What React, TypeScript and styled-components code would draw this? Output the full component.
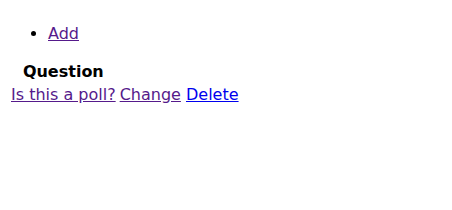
import styled, { createGlobalStyle } from "styled-components";

/**
 * Styled
 */
const GlobalStyle = createGlobalStyle`
  body {
    margin: 8px;
    font-family: "DejaVu Sans", sans-serif;
    font-size: 16px;
    background: #ffffff;
    color: #000000;
  }
`;

const ActionList = styled.ul`
  margin: 16px 0;
  padding-left: 40px;
  list-style: disc;
`;

const Link = styled.a<{ $visited?: boolean }>`
  color: ${({ $visited }) => ($visited ? "#551a8b" : "#0000ee")};
  text-decoration: underline;
  cursor: pointer;
`;

const Table = styled.table`
  border-collapse: separate;
  border-spacing: 2px;
`;

const HeadCell = styled.th`
  padding: 1px;
  font-weight: bold;
  text-align: center;
`;

const Cell = styled.td`
  padding: 1px;
`;

type Row = {
  title: string;
};

const rows: Row[] = [{ title: "Is this a poll?" }];

const App = () => {
  return (
    <>
      <GlobalStyle />
      <ActionList>
        <li>
          <Link href="#add" $visited>
            Add
          </Link>
        </li>
      </ActionList>
      <Table>
        <thead>
          <tr>
            <HeadCell>Question</HeadCell>
          </tr>
        </thead>
        <tbody>
          {rows.map((row) => (
            <tr key={row.title}>
              <Cell>
                <Link href="#show" $visited>
                  {row.title}
                </Link>
              </Cell>
              <Cell>
                <Link href="#edit" $visited>
                  Change
                </Link>{" "}
                <Link href="#delete">Delete</Link>
              </Cell>
            </tr>
          ))}
        </tbody>
      </Table>
    </>
  );
};

export default App;
